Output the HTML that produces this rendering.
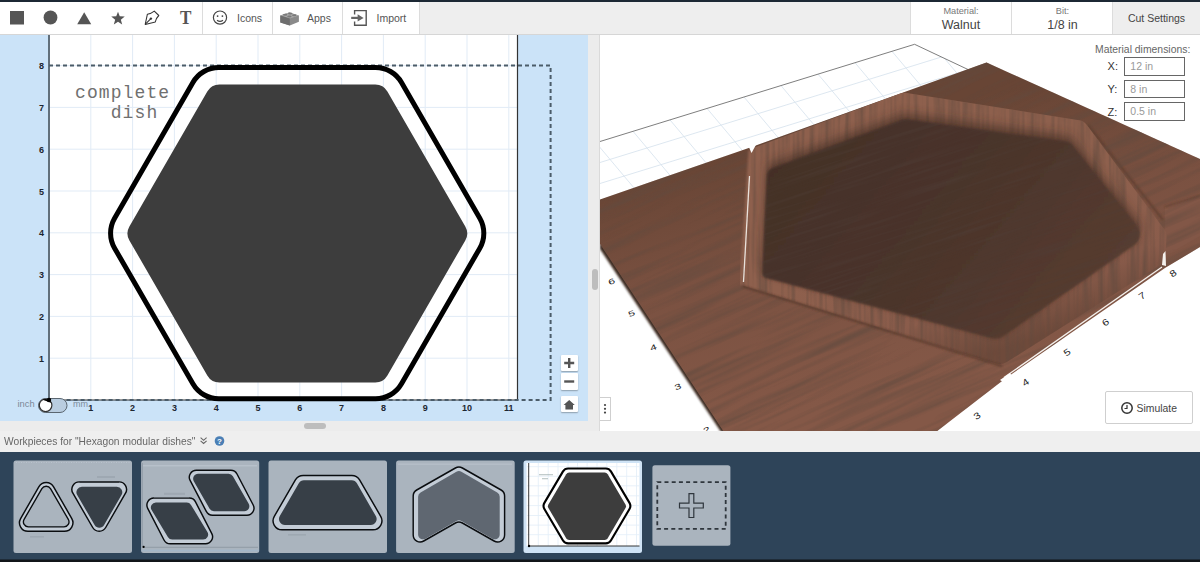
<!DOCTYPE html>
<html><head><meta charset="utf-8">
<style>
*{margin:0;padding:0;box-sizing:border-box}
html,body{width:1200px;height:562px;overflow:hidden;background:#fff;font-family:"Liberation Sans", sans-serif}
.abs{position:absolute}
#topstrip{left:0;top:0;width:1200px;height:2px;background:#1c2834}
#toolbar{left:0;top:2px;width:1200px;height:33px;background:#eeeeee;border-bottom:1px solid #d6d6d6}
.tb{position:absolute;top:0;height:32px;background:#fff;border-right:1px solid #dcdcdc}
.tbt{position:absolute;font-size:10.5px;color:#555;top:9px;white-space:nowrap;line-height:13px}
#canvas{left:0;top:35px;width:588px;height:386px;background:#cbe3f8;overflow:hidden}
.ax{position:absolute;font-size:9px;font-weight:bold;color:#1d2630;text-align:center;line-height:12px}
#hscroll{left:0;top:421px;width:588px;height:10px;background:#ececec}
#splitter{left:588px;top:35px;width:12px;height:396px;background:#ececec;border-right:1px solid #dadada}
#view3d{left:600px;top:35px;width:600px;height:396px;background:#fff;overflow:hidden}
#wpbar{left:0;top:431px;width:1200px;height:21px;background:#efefef}
#panel{left:0;top:452px;width:1200px;height:110px;background:#2e4459}
.zbtn{position:absolute;left:561px;width:16.5px;height:16.5px;background:#fff;box-shadow:0 1px 1.5px rgba(0,0,0,.3);border-radius:1px}
.inp{position:absolute;left:524.3px;width:60.5px;height:18.5px;border:1px solid #666;background:#fff;font-size:10.5px;color:#999;padding-left:5px;line-height:16.5px}
.inl{position:absolute;left:507.6px;font-size:11px;color:#333;line-height:13px}
</style></head><body>
<div id="topstrip" class="abs"></div>
<div id="toolbar" class="abs">
  <div class="tb" style="left:0;width:203px"></div>
  <div class="tb" style="left:203px;width:70px"></div>
  <div class="tb" style="left:273px;width:70px"></div>
  <div class="tb" style="left:343px;width:77px"></div>
  <div class="tb" style="left:910px;width:102px;border-left:1px solid #dcdcdc"></div>
  <div class="tb" style="left:1012px;width:101px"></div>
  <svg width="420" height="32" style="position:absolute;left:0;top:0"><rect x="10" y="9" width="14" height="13.5" fill="#555"/>
<circle cx="50.5" cy="15.5" r="6.9" fill="#555"/>
<polygon points="77.2,22.3 91.2,22.3 84.2,10.2" fill="#555"/>
<polygon points="118.00,9.70 119.76,14.37 124.75,14.61 120.85,17.73 122.17,22.54 118.00,19.80 113.83,22.54 115.15,17.73 111.25,14.61 116.24,14.37" fill="#555"/>
<g fill="none" stroke="#333" stroke-width="1.05" stroke-linejoin="round"><path d="M145.2,22.4 L147.4,12.2 Q151.2,11.6 154.3,9.1 L158.8,13.5 Q156,16.2 155.3,19.9 Z"/><path d="M145.4,22.2 L150.9,16.6"/></g><circle cx="150.9" cy="16.6" r="1.2" fill="#333"/>
<text x="0" y="0" transform="translate(185.7 22.3) scale(0.9 1)" font-family="Liberation Serif" font-weight="bold" font-size="19" fill="#555" text-anchor="middle">T</text>
<circle cx="220" cy="15.6" r="6.6" fill="none" stroke="#444" stroke-width="1.2"/><circle cx="217.6" cy="14.1" r="0.9" fill="#444"/><circle cx="222.4" cy="14.1" r="0.9" fill="#444"/><path d="M217,18.2 Q220,20.6 223,18.2" fill="none" stroke="#444" stroke-width="1.2"/>
<g><polygon points="280.3,13.6 289.2,10.6 298.9,13.4 298.9,19.8 289.8,23.6 280.3,20.6" fill="#8a8a8a"/><polygon points="280.3,13.6 289.8,16.6 298.9,13.4 289.2,10.6" fill="#a8a8a8"/><polygon points="280.3,13.6 289.8,16.6 289.8,23.6 280.3,20.6" fill="#6e6e6e"/><ellipse cx="285.2" cy="12.8" rx="2.2" ry="1" fill="#7a7a7a"/><ellipse cx="290.2" cy="11.4" rx="2.2" ry="1" fill="#7a7a7a"/><ellipse cx="289.4" cy="14.6" rx="2.2" ry="1" fill="#7a7a7a"/><ellipse cx="294.2" cy="13.2" rx="2.2" ry="1" fill="#7a7a7a"/></g>
<path d="M354.6,12.6 V8.6 H366.2 V23.2 H354.6 V19.6" fill="none" stroke="#555" stroke-width="1.4"/><path d="M351.2,15.9 H358.6" stroke="#666" stroke-width="2.2"/><polygon points="357.6,12.2 363.6,15.9 357.6,19.6" fill="#666"/></svg>
  <div class="tbt" style="left:237px;top:9.8px">Icons</div>
  <div class="tbt" style="left:307px;top:9.8px">Apps</div>
  <div class="tbt" style="left:376.5px;top:9.8px">Import</div>
  <div class="tbt" style="left:910px;width:102px;text-align:center;top:2.5px;font-size:9.2px;color:#777">Material:</div>
  <div class="tbt" style="left:910px;width:102px;text-align:center;top:15.8px;font-size:12.5px;color:#444;line-height:15px">Walnut</div>
  <div class="tbt" style="left:1012px;width:101px;text-align:center;top:2.5px;font-size:9.2px;color:#777">Bit:</div>
  <div class="tbt" style="left:1012px;width:101px;text-align:center;top:16.2px;font-size:12.5px;color:#444;line-height:15px">1/8 in</div>
  <div class="tbt" style="left:1113px;width:87px;text-align:center;top:9.9px;font-size:10.5px;color:#444">Cut Settings</div>
</div>
<div id="canvas" class="abs">
  <svg width="588" height="386" style="position:absolute;left:0;top:0">
  <rect x="50" y="0" width="467" height="365" fill="#fff"/>
<line x1="90.8" y1="0" x2="90.8" y2="365" stroke="#e1ebf6" stroke-width="1"/>
<line x1="132.6" y1="0" x2="132.6" y2="365" stroke="#e1ebf6" stroke-width="1"/>
<line x1="174.4" y1="0" x2="174.4" y2="365" stroke="#e1ebf6" stroke-width="1"/>
<line x1="216.2" y1="0" x2="216.2" y2="365" stroke="#e1ebf6" stroke-width="1"/>
<line x1="258.0" y1="0" x2="258.0" y2="365" stroke="#e1ebf6" stroke-width="1"/>
<line x1="299.8" y1="0" x2="299.8" y2="365" stroke="#e1ebf6" stroke-width="1"/>
<line x1="341.6" y1="0" x2="341.6" y2="365" stroke="#e1ebf6" stroke-width="1"/>
<line x1="383.4" y1="0" x2="383.4" y2="365" stroke="#e1ebf6" stroke-width="1"/>
<line x1="425.2" y1="0" x2="425.2" y2="365" stroke="#e1ebf6" stroke-width="1"/>
<line x1="467.0" y1="0" x2="467.0" y2="365" stroke="#e1ebf6" stroke-width="1"/>
<line x1="508.8" y1="0" x2="508.8" y2="365" stroke="#e1ebf6" stroke-width="1"/>
<line x1="50" y1="323.2" x2="517" y2="323.2" stroke="#e1ebf6" stroke-width="1"/>
<line x1="50" y1="281.4" x2="517" y2="281.4" stroke="#e1ebf6" stroke-width="1"/>
<line x1="50" y1="239.6" x2="517" y2="239.6" stroke="#e1ebf6" stroke-width="1"/>
<line x1="50" y1="197.8" x2="517" y2="197.8" stroke="#e1ebf6" stroke-width="1"/>
<line x1="50" y1="156.0" x2="517" y2="156.0" stroke="#e1ebf6" stroke-width="1"/>
<line x1="50" y1="114.2" x2="517" y2="114.2" stroke="#e1ebf6" stroke-width="1"/>
<line x1="50" y1="72.4" x2="517" y2="72.4" stroke="#e1ebf6" stroke-width="1"/>
<line x1="50" y1="30.6" x2="517" y2="30.6" stroke="#e1ebf6" stroke-width="1"/>
<line x1="517.5" y1="0" x2="517.5" y2="365" stroke="#333" stroke-width="1.2"/>
<line x1="49" y1="0" x2="49" y2="366" stroke="#56636d" stroke-width="1.8"/>
<line x1="49" y1="365" x2="517" y2="365" stroke="#333" stroke-width="1"/>
<path d="M49 30.6 H550.6 V365 H49" fill="none" stroke="#4b5c69" stroke-width="2" stroke-dasharray="4 3"/>
<path transform="translate(0,-35)" d="M114.6 218.2 L192.9 82.5 A30.0 30.0 0 0 1 218.9 67.5 L375.5 67.5 A30.0 30.0 0 0 1 401.5 82.5 L479.8 218.2 A30.0 30.0 0 0 1 479.8 248.2 L401.5 383.8 A30.0 30.0 0 0 1 375.5 398.8 L218.9 398.8 A30.0 30.0 0 0 1 192.9 383.8 L114.6 248.2 A30.0 30.0 0 0 1 114.6 218.2 Z" fill="none" stroke="#000" stroke-width="5"/>
<path transform="translate(0,-35)" d="M129.4 226.4 L207.3 91.5 A14.0 14.0 0 0 1 219.4 84.5 L375.3 84.5 A14.0 14.0 0 0 1 387.4 91.5 L465.3 226.4 A14.0 14.0 0 0 1 465.3 240.4 L387.4 375.4 A14.0 14.0 0 0 1 375.3 382.4 L219.4 382.4 A14.0 14.0 0 0 1 207.3 375.4 L129.4 240.4 A14.0 14.0 0 0 1 129.4 226.4 Z" fill="#3d3d3d"/>
<rect x="38.5" y="363.5" width="28.5" height="14" rx="7" fill="#b9cde0" stroke="#5a6670" stroke-width="1"/>
<circle cx="45.6" cy="370.3" r="6.3" fill="#fff" stroke="#333" stroke-width="1.2"/>
<path d="M42.5,364.8 A6.3 6.3 0 0 1 51.4,368 L49,367 Z" fill="#000"/>
<circle cx="49" cy="365" r="2.2" fill="#000"/>
  </svg>
  <div class="abs" style="left:75px;top:47.7px;font-family:'Liberation Mono',monospace;font-size:18px;letter-spacing:1.1px;color:#707070;line-height:20.7px;white-space:pre">complete
   dish</div>
  <div class="abs" style="left:17.5px;top:364px;font-size:9.3px;color:#7b8896">inch</div>
  <div class="abs" style="left:73px;top:364px;font-size:9px;color:#7b8a99">mm</div>
  <div class="zbtn" style="top:319.6px"></div>
  <div class="zbtn" style="top:338px"></div>
  <div class="zbtn" style="top:360.7px"></div>
  <svg width="588" height="386" style="position:absolute;left:0;top:0">
    <path d="M569.2,323 V333 M564.2,328 H574.2" stroke="#555" stroke-width="2.4"/>
    <path d="M564.2,346.5 H574.2" stroke="#555" stroke-width="2.4"/>
    <path d="M563.6,370 L569.2,365 L574.8,370 H573 V374.5 H565.4 V370 Z" fill="#555"/>
  </svg>
</div>
<div class="abs" style="left:0;top:0;width:0;height:0">
<div class="ax" style="left:80.8px;top:402.3px;width:20px">1</div>
<div class="ax" style="left:122.6px;top:402.3px;width:20px">2</div>
<div class="ax" style="left:164.4px;top:402.3px;width:20px">3</div>
<div class="ax" style="left:206.2px;top:402.3px;width:20px">4</div>
<div class="ax" style="left:248.0px;top:402.3px;width:20px">5</div>
<div class="ax" style="left:289.8px;top:402.3px;width:20px">6</div>
<div class="ax" style="left:331.6px;top:402.3px;width:20px">7</div>
<div class="ax" style="left:373.4px;top:402.3px;width:20px">8</div>
<div class="ax" style="left:415.2px;top:402.3px;width:20px">9</div>
<div class="ax" style="left:457.0px;top:402.3px;width:20px">10</div>
<div class="ax" style="left:498.8px;top:402.3px;width:20px">11</div>
<div class="ax" style="left:31.6px;top:352.7px;width:20px">1</div>
<div class="ax" style="left:31.6px;top:310.9px;width:20px">2</div>
<div class="ax" style="left:31.6px;top:269.1px;width:20px">3</div>
<div class="ax" style="left:31.6px;top:227.3px;width:20px">4</div>
<div class="ax" style="left:31.6px;top:185.5px;width:20px">5</div>
<div class="ax" style="left:31.6px;top:143.7px;width:20px">6</div>
<div class="ax" style="left:31.6px;top:101.9px;width:20px">7</div>
<div class="ax" style="left:31.6px;top:60.1px;width:20px">8</div>
</div>
<div id="hscroll" class="abs"><div class="abs" style="left:304px;top:2px;width:22px;height:6px;border-radius:3px;background:#bdbdbd"></div></div>
<div id="splitter" class="abs"><div class="abs" style="left:3.5px;top:234px;width:6px;height:21px;border-radius:3px;background:#bdbdbd"></div></div>
<div id="view3d" class="abs">
  <svg width="600" height="396" style="position:absolute;left:0;top:0"><defs><linearGradient id="gBoard" gradientUnits="userSpaceOnUse" x1="100" y1="125" x2="160" y2="385"><stop offset="0" stop-color="#684535"/><stop offset="0.45" stop-color="#7a5141"/><stop offset="1" stop-color="#845847"/></linearGradient><linearGradient id="gFloor" gradientUnits="userSpaceOnUse" x1="180" y1="95" x2="440" y2="315"><stop offset="0" stop-color="#432f27"/><stop offset="0.5" stop-color="#4a342b"/><stop offset="1" stop-color="#573c30"/></linearGradient><linearGradient id="gRim" gradientUnits="userSpaceOnUse" x1="300" y1="215" x2="340" y2="335"><stop offset="0" stop-color="#8e604d"/><stop offset="0.6" stop-color="#8a5c4b"/><stop offset="1" stop-color="#6e4a3b"/></linearGradient><linearGradient id="gW1" gradientUnits="userSpaceOnUse" x1="220" y1="90" x2="230" y2="115"><stop offset="0" stop-color="#835746"/><stop offset="0.5" stop-color="#6f4a3a"/><stop offset="1" stop-color="#4a332b"/></linearGradient><linearGradient id="gW2" gradientUnits="userSpaceOnUse" x1="390" y1="71" x2="385" y2="97"><stop offset="0" stop-color="#835746"/><stop offset="0.5" stop-color="#6f4a3a"/><stop offset="1" stop-color="#4a332b"/></linearGradient><linearGradient id="gW3" gradientUnits="userSpaceOnUse" x1="550" y1="170" x2="525" y2="187"><stop offset="0" stop-color="#86594a"/><stop offset="0.6" stop-color="#7a5141"/><stop offset="1" stop-color="#5a3c30"/></linearGradient><linearGradient id="gW4" gradientUnits="userSpaceOnUse" x1="144" y1="185" x2="164" y2="187"><stop offset="0" stop-color="#86594a"/><stop offset="0.6" stop-color="#7a5141"/><stop offset="1" stop-color="#55392e"/></linearGradient>
<filter id="blur2" x="-10%" y="-10%" width="120%" height="120%"><feGaussianBlur stdDeviation="1.5"/></filter>
<filter id="blur6" x="-20%" y="-20%" width="140%" height="140%"><feGaussianBlur stdDeviation="5"/></filter>
<filter id="blur1" x="-10%" y="-10%" width="120%" height="120%"><feGaussianBlur stdDeviation="1"/></filter>
<filter id="grain" x="0" y="0" width="1" height="1" filterUnits="objectBoundingBox">
 <feTurbulence type="fractalNoise" baseFrequency="0.006 0.13" numOctaves="3" seed="7"/>
 <feColorMatrix type="matrix" values="0 0 0 0 0.12  0 0 0 0 0.07  0 0 0 0 0.05  2.2 0 0 0 -0.95"/>
</filter>
<filter id="fgrain" x="0" y="0" width="1" height="1" filterUnits="objectBoundingBox">
 <feTurbulence type="fractalNoise" baseFrequency="0.01 0.3" numOctaves="2" seed="5"/>
 <feColorMatrix type="matrix" values="0 0 0 0 0.08  0 0 0 0 0.05  0 0 0 0 0.04  2.0 0 0 0 -0.9"/>
</filter>
<filter id="vgrain" x="0" y="0" width="1" height="1" filterUnits="objectBoundingBox">
 <feTurbulence type="fractalNoise" baseFrequency="0.2 0.01" numOctaves="2" seed="11"/>
 <feColorMatrix type="matrix" values="0 0 0 0 0.12  0 0 0 0 0.07  0 0 0 0 0.05  2.4 0 0 0 -0.95"/>
</filter>
<clipPath id="cBoard"><polygon points="0.0,164.4 152.3,111.8 386.5,27.4 600.0,124.0 600.0,212.0 565.0,233.0 406.0,343.0 336.0,397.0 124.0,397.0 0.0,208.7"/></clipPath>
<clipPath id="cFloor"><path d="M172.0 133.2 L301.6 84.9 A10.0 10.0 0 0 1 306.5 84.3 L465.3 106.3 A12.0 12.0 0 0 1 473.0 110.7 L536.7 190.3 A14.0 14.0 0 0 1 533.7 210.5 L403.3 301.3 A14.0 14.0 0 0 1 391.7 303.3 L166.7 243.2 A6.0 6.0 0 0 1 162.2 237.2 L166.8 140.3 A8.0 8.0 0 0 1 172.0 133.2 Z"/></clipPath>
<clipPath id="cRing"><path d="M153.7 112.7 L301.0 58.2 A8.0 8.0 0 0 1 305.1 57.8 L479.1 85.2 A12.0 12.0 0 0 1 486.9 89.9 L565.7 196.2 A6.0 6.0 0 0 1 566.8 200.2 L565.2 224.0 A6.0 6.0 0 0 1 562.4 228.6 L406.7 327.1 A12.0 12.0 0 0 1 396.7 328.4 L145.5 251.4 A6.0 6.0 0 0 1 141.3 245.3 L149.7 117.9 A6.0 6.0 0 0 1 153.7 112.7 Z"/></clipPath>
</defs>
<clipPath id="cPlane"><polygon points="0.0,106.5 314.6,9.3 400.0,49.0 0.0,164.4"/></clipPath>
<polygon points="0.0,106.5 314.6,9.3 400.0,49.0 0.0,164.4" fill="#fff"/>
<g stroke="#d9e4ee" stroke-width="0.9" clip-path="url(#cPlane)"><line x1="0.0" y1="127.5" x2="400.0" y2="3.9"/><line x1="0.0" y1="148.5" x2="400.0" y2="24.9"/><line x1="0.0" y1="169.5" x2="400.0" y2="45.9"/><line x1="-44.0" y1="60.1" x2="76.0" y2="202.9"/><line x1="-7.0" y1="48.7" x2="113.0" y2="191.5"/><line x1="30.0" y1="37.3" x2="150.0" y2="180.1"/><line x1="67.0" y1="25.8" x2="187.0" y2="168.6"/><line x1="104.0" y1="14.4" x2="224.0" y2="157.2"/><line x1="141.0" y1="3.0" x2="261.0" y2="145.8"/><line x1="178.0" y1="-8.5" x2="298.0" y2="134.3"/><line x1="215.0" y1="-19.9" x2="335.0" y2="122.9"/><line x1="252.0" y1="-31.3" x2="372.0" y2="111.5"/><line x1="289.0" y1="-42.7" x2="409.0" y2="100.1"/></g>
<polyline points="0.0,106.5 314.6,9.3 368.0,34.5" fill="none" stroke="#6f6f6f" stroke-width="0.9"/>
<polygon points="0.0,206.0 126.0,397.0 121.0,397.0 0.0,214.0" fill="#3a271e" filter="url(#blur1)"/>
<polygon points="0.0,164.4 152.3,111.8 386.5,27.4 600.0,124.0 600.0,212.0 565.0,233.0 406.0,343.0 336.0,397.0 124.0,397.0 0.0,208.7" fill="url(#gBoard)"/>
<polygon points="565.0,172.0 600.0,161.0 600.0,201.0 565.0,221.0" fill="#825747"/>
<polyline points="565.0,172.0 600.0,161.0" stroke="#5a3a2c" stroke-width="1.2" fill="none" filter="url(#blur1)"/>
<polyline points="488.0,90.0 563.0,185.0" stroke="#5a3a2c" stroke-width="1.6" fill="none" filter="url(#blur1)"/>
<g clip-path="url(#cBoard)" opacity="0.75"><rect x="-300" y="-300" width="1200" height="1000" transform="rotate(-24 300 200)" filter="url(#grain)"/></g>
<path d="M153.7 112.7 L301.0 58.2 A8.0 8.0 0 0 1 305.1 57.8 L479.1 85.2 A12.0 12.0 0 0 1 486.9 89.9 L565.7 196.2 A6.0 6.0 0 0 1 566.8 200.2 L565.2 224.0 A6.0 6.0 0 0 1 562.4 228.6 L406.7 327.1 A12.0 12.0 0 0 1 396.7 328.4 L145.5 251.4 A6.0 6.0 0 0 1 141.3 245.3 L149.7 117.9 A6.0 6.0 0 0 1 153.7 112.7 Z" fill="url(#gRim)"/>
<g clip-path="url(#cRing)">
<rect x="100" y="40" width="600" height="360" filter="url(#vgrain)" opacity="0.6"/>
<path transform="translate(0,-6)" d="M172.0 133.2 L301.6 84.9 A10.0 10.0 0 0 1 306.5 84.3 L465.3 106.3 A12.0 12.0 0 0 1 473.0 110.7 L536.7 190.3 A14.0 14.0 0 0 1 533.7 210.5 L403.3 301.3 A14.0 14.0 0 0 1 391.7 303.3 L166.7 243.2 A6.0 6.0 0 0 1 162.2 237.2 L166.8 140.3 A8.0 8.0 0 0 1 172.0 133.2 Z" fill="#3e2a22" opacity="0.6" filter="url(#blur6)"/>
</g>
<polyline points="143.0,251.5 402.0,331.0" stroke="#543729" stroke-width="1.8" fill="none" filter="url(#blur1)"/>
<path d="M172.0 133.2 L301.6 84.9 A10.0 10.0 0 0 1 306.5 84.3 L465.3 106.3 A12.0 12.0 0 0 1 473.0 110.7 L536.7 190.3 A14.0 14.0 0 0 1 533.7 210.5 L403.3 301.3 A14.0 14.0 0 0 1 391.7 303.3 L166.7 243.2 A6.0 6.0 0 0 1 162.2 237.2 L166.8 140.3 A8.0 8.0 0 0 1 172.0 133.2 Z" fill="url(#gFloor)" filter="url(#blur1)"/>
<g clip-path="url(#cFloor)" opacity="0.6"><rect x="-300" y="-300" width="1200" height="1000" transform="rotate(-18 300 200)" filter="url(#fgrain)"/></g>
<polyline points="150.0,115.0 141.0,250.0" stroke="#8e604e" stroke-width="3" fill="none" filter="url(#blur1)"/>
<polyline points="149.5,141.0 143.5,247.0" stroke="#f3efeb" stroke-width="1.3" fill="none" opacity="0.9"/>
<polygon points="148.0,110.0 157.0,108.0 151.5,118.0" fill="#fff"/>
<polyline points="404.0,342.5 562.0,232.0" stroke="#f4f0ec" stroke-width="1.3" fill="none"/>
<polygon points="400.0,345.0 410.0,338.0 412.0,341.0 403.0,347.0" fill="#fff"/>
<polygon points="563.0,219.0 565.5,216.0 566.0,231.0 562.0,230.0" fill="#f4f0ec"/>
  <text x="0" y="0" transform="translate(11.5 246.5) rotate(-22) scale(1 0.65)" font-size="12" fill="#222" text-anchor="middle" dominant-baseline="central">6</text>
<text x="0" y="0" transform="translate(31.700000000000045 278.5) rotate(-22) scale(1 0.65)" font-size="12" fill="#222" text-anchor="middle" dominant-baseline="central">5</text>
<text x="0" y="0" transform="translate(53.299999999999955 312.5) rotate(-22) scale(1 0.65)" font-size="12" fill="#222" text-anchor="middle" dominant-baseline="central">4</text>
<text x="0" y="0" transform="translate(77.79999999999995 351.7) rotate(-22) scale(1 0.65)" font-size="12" fill="#222" text-anchor="middle" dominant-baseline="central">3</text>
<text x="0" y="0" transform="translate(106.60000000000002 395) rotate(-22) scale(1 0.65)" font-size="12" fill="#222" text-anchor="middle" dominant-baseline="central">2</text>
<text x="0" y="0" transform="translate(377 381) rotate(-35) scale(1 0.8)" font-size="11.5" fill="#222" text-anchor="middle" dominant-baseline="central">3</text>
<text x="0" y="0" transform="translate(425.5 347.5) rotate(-35) scale(1 0.8)" font-size="11.5" fill="#222" text-anchor="middle" dominant-baseline="central">4</text>
<text x="0" y="0" transform="translate(467 317.5) rotate(-35) scale(1 0.8)" font-size="11.5" fill="#222" text-anchor="middle" dominant-baseline="central">5</text>
<text x="0" y="0" transform="translate(505.5 287.5) rotate(-35) scale(1 0.8)" font-size="11.5" fill="#222" text-anchor="middle" dominant-baseline="central">6</text>
<text x="0" y="0" transform="translate(542 261) rotate(-35) scale(1 0.8)" font-size="11.5" fill="#222" text-anchor="middle" dominant-baseline="central">7</text>
<text x="0" y="0" transform="translate(573 238.5) rotate(-35) scale(1 0.8)" font-size="11.5" fill="#222" text-anchor="middle" dominant-baseline="central">8</text></svg>
  <div class="abs" style="left:495px;top:8px;font-size:10.4px;color:#666;line-height:13px;white-space:nowrap">Material dimensions:</div>
  <div class="inl" style="top:25px">X:</div>
  <div class="inl" style="top:48px">Y:</div>
  <div class="inl" style="top:71px">Z:</div>
  <div class="inp" style="top:22.3px">12 in</div>
  <div class="inp" style="top:44.5px">8 in</div>
  <div class="inp" style="top:67.2px">0.5 in</div>
  <div class="abs" style="left:504.6px;top:355.8px;width:88.4px;height:33.6px;border:1px solid #cfcfcf;border-radius:2px;background:#fff"></div>
  <svg width="600" height="396" style="position:absolute;left:0;top:0">
    <circle cx="527" cy="373" r="5.2" fill="none" stroke="#333" stroke-width="1.5"/>
    <path d="M527,370 V373.5 H524.5" fill="none" stroke="#333" stroke-width="1.2"/>
  </svg>
  <div class="abs" style="left:536.5px;top:366.8px;font-size:10.4px;color:#444;line-height:13px">Simulate</div>
  <div class="abs" style="left:0;top:362px;width:10.5px;height:23.5px;border:1px solid #cfcfcf;border-left:none;background:#fff"></div>
  <svg width="12" height="30" style="position:absolute;left:0;top:362px"><circle cx="5" cy="8" r="1.1" fill="#444"/><circle cx="5" cy="11.8" r="1.1" fill="#444"/><circle cx="5" cy="15.6" r="1.1" fill="#444"/></svg>
</div>
<div id="wpbar" class="abs">
  <div class="abs" style="left:4px;top:4px;font-size:11.2px;color:#666;line-height:13px;white-space:nowrap;transform:scaleX(0.915);transform-origin:0 0">Workpieces for "Hexagon modular dishes"</div>
  <svg width="240" height="21" style="position:absolute;left:0;top:0">
    <path d="M200.6,6.6 L203.6,9.3 L206.6,6.6 M200.6,9.8 L203.6,12.5 L206.6,9.8" fill="none" stroke="#666" stroke-width="1.1"/>
    <circle cx="219.5" cy="10" r="4.8" fill="#4a7fb5"/>
    <text x="219.5" y="13.3" font-size="8" font-weight="bold" fill="#fff" text-anchor="middle">?</text>
  </svg>
</div>
<div id="panel" class="abs">
  <svg width="1200" height="110" style="position:absolute;left:0;top:0"><rect x="13.5" y="8.600000000000023" width="118.5" height="92.4" rx="2.5" fill="#aab4be"/>
<rect x="141.1" y="8.600000000000023" width="118.1" height="92.4" rx="2.5" fill="#aab4be"/>
<rect x="268.5" y="8.600000000000023" width="118.5" height="92.4" rx="2.5" fill="#aab4be"/>
<rect x="396.1" y="8.600000000000023" width="118.6" height="92.4" rx="2.5" fill="#aab4be"/>
<line x1="16" y1="10.5" x2="130" y2="10.5" stroke="#bcc5ce" stroke-width="0.8" stroke-dasharray="1 1.5"/>
<line x1="143" y1="13.800000000000011" x2="257" y2="13.800000000000011" stroke="#bfc8d1" stroke-width="0.9"/>
<line x1="142.4" y1="11" x2="142.4" y2="95.29999999999995" stroke="#8d98a3" stroke-width="0.8"/>
<line x1="142.4" y1="95.29999999999995" x2="258" y2="95.29999999999995" stroke="#8d98a3" stroke-width="0.9"/>
<line x1="141.5" y1="98.5" x2="259" y2="98.5" stroke="#9fb8d0" stroke-width="2" opacity="0.5"/>
<circle cx="143.6" cy="94.89999999999998" r="1.1" fill="#000"/>
<line x1="398" y1="12.100000000000023" x2="512" y2="12.100000000000023" stroke="#bcc5ce" stroke-width="0.9"/>
<path d="M53.6 34.8 L71.8 66.6 A8.5 8.5 0 0 1 64.4 79.3 L28.0 79.3 A8.5 8.5 0 0 1 20.6 66.6 L38.8 34.8 A8.5 8.5 0 0 1 53.6 34.8 Z" fill="#c3ccd6" stroke="#0a0d10" stroke-width="1.45"/>
<path d="M50.5 36.7 L68.3 67.4 A5.0 5.0 0 0 1 63.9 74.9 L28.5 74.9 A5.0 5.0 0 0 1 24.1 67.4 L41.9 36.7 A5.0 5.0 0 0 1 50.5 36.7 Z" fill="#aab4be" stroke="#0a0d10" stroke-width="1.35"/>
<path d="M79.4 29.9 L119.0 29.9 A7.5 7.5 0 0 1 125.5 41.2 L105.7 75.5 A7.5 7.5 0 0 1 92.7 75.5 L72.9 41.2 A7.5 7.5 0 0 1 79.4 29.9 Z" fill="#c3ccd6" stroke="#0a0d10" stroke-width="1.45"/>
<path d="M82.0 34.8 L116.7 34.8 A5.5 5.5 0 0 1 121.5 43.1 L104.1 72.9 A5.5 5.5 0 0 1 94.6 72.9 L77.2 43.1 A5.5 5.5 0 0 1 82.0 34.8 Z" fill="#373f47"/>
<rect x="97" y="24" width="18" height="2" fill="#98a2ac" opacity="0.7"/>
<rect x="30" y="84" width="14" height="1.5" fill="#98a2ac" opacity="0.7"/>
<path d="M196.4 18.2 L230.8 18.2 A7.0 7.0 0 0 1 237.0 22.0 L253.2 53.0 A7.0 7.0 0 0 1 246.9 63.2 L212.5 63.2 A7.0 7.0 0 0 1 206.3 59.4 L190.1 28.4 A7.0 7.0 0 0 1 196.4 18.2 Z" fill="#c3ccd6" stroke="#0a0d10" stroke-width="1.45"/>
<path d="M198.1 21.7 L228.6 21.7 A5.0 5.0 0 0 1 232.9 24.2 L248.7 51.7 A5.0 5.0 0 0 1 244.4 59.2 L213.9 59.2 A5.0 5.0 0 0 1 209.6 56.7 L193.8 29.2 A5.0 5.0 0 0 1 198.1 21.7 Z" fill="#373f47"/>
<path d="M154.0 46.1 L189.2 46.1 A7.0 7.0 0 0 1 195.5 49.9 L211.8 81.6 A7.0 7.0 0 0 1 205.5 91.8 L170.3 91.8 A7.0 7.0 0 0 1 164.0 88.0 L147.7 56.3 A7.0 7.0 0 0 1 154.0 46.1 Z" fill="#c3ccd6" stroke="#0a0d10" stroke-width="1.45"/>
<path d="M155.9 50.5 L186.7 50.5 A5.0 5.0 0 0 1 191.0 52.9 L207.4 80.0 A5.0 5.0 0 0 1 203.1 87.6 L172.3 87.6 A5.0 5.0 0 0 1 168.0 85.2 L151.6 58.1 A5.0 5.0 0 0 1 155.9 50.5 Z" fill="#373f47"/>
<rect x="164" y="40.80000000000001" width="21" height="2" fill="#98a2ac" opacity="0.7"/>
<path d="M303.2 23.4 L351.8 23.4 A9.0 9.0 0 0 1 359.6 27.9 L380.7 64.3 A9.0 9.0 0 0 1 372.9 77.8 L282.1 77.8 A9.0 9.0 0 0 1 274.3 64.3 L295.4 27.9 A9.0 9.0 0 0 1 303.2 23.4 Z" fill="#c3ccd6" stroke="#0a0d10" stroke-width="1.45"/>
<path d="M304.0 28.3 L351.7 28.3 A6.0 6.0 0 0 1 356.9 31.3 L375.8 64.1 A6.0 6.0 0 0 1 370.6 73.1 L285.0 73.1 A6.0 6.0 0 0 1 279.8 64.1 L298.8 31.3 A6.0 6.0 0 0 1 304.0 28.3 Z" fill="#373f47"/>
<rect x="288" y="82" width="18" height="1.6" fill="#98a2ac" opacity="0.7"/>
<path d="M462.4 16.0 L501.1 38.0 A7.0 7.0 0 0 1 504.6 44.1 L504.6 83.0 A7.0 7.0 0 0 1 494.1 89.0 L462.4 71.0 A7.0 7.0 0 0 0 455.4 71.0 L423.7 89.0 A7.0 7.0 0 0 1 413.2 83.0 L413.2 44.1 A7.0 7.0 0 0 1 416.7 38.0 L455.4 16.0 A7.0 7.0 0 0 1 462.4 16.0 Z" fill="#c3ccd6" stroke="#0a0d10" stroke-width="1.45"/>
<path d="M461.4 19.7 L497.2 40.4 A5.0 5.0 0 0 1 499.7 44.7 L499.7 82.4 A5.0 5.0 0 0 1 492.2 86.7 L461.4 68.9 A5.0 5.0 0 0 0 456.4 68.9 L425.6 86.7 A5.0 5.0 0 0 1 418.1 82.4 L418.1 44.7 A5.0 5.0 0 0 1 420.6 40.4 L456.4 19.7 A5.0 5.0 0 0 1 461.4 19.7 Z" fill="#5f6771"/>
<rect x="523.5" y="8.600000000000023" width="118.5" height="92.4" rx="2.5" fill="#cfe3f5"/>
<rect x="526.5" y="11" width="113" height="83" fill="#fff"/>
<line x1="538.3" y1="11" x2="538.3" y2="94" stroke="#e2edf7" stroke-width="0.8"/>
<line x1="548.2" y1="11" x2="548.2" y2="94" stroke="#e2edf7" stroke-width="0.8"/>
<line x1="558" y1="11" x2="558" y2="94" stroke="#e2edf7" stroke-width="0.8"/>
<line x1="568" y1="11" x2="568" y2="94" stroke="#e2edf7" stroke-width="0.8"/>
<line x1="577.5" y1="11" x2="577.5" y2="94" stroke="#e2edf7" stroke-width="0.8"/>
<line x1="587.1" y1="11" x2="587.1" y2="94" stroke="#e2edf7" stroke-width="0.8"/>
<line x1="597" y1="11" x2="597" y2="94" stroke="#e2edf7" stroke-width="0.8"/>
<line x1="606.8" y1="11" x2="606.8" y2="94" stroke="#e2edf7" stroke-width="0.8"/>
<line x1="616.8" y1="11" x2="616.8" y2="94" stroke="#e2edf7" stroke-width="0.8"/>
<line x1="626.7" y1="11" x2="626.7" y2="94" stroke="#e2edf7" stroke-width="0.8"/>
<line x1="636.5" y1="11" x2="636.5" y2="94" stroke="#e2edf7" stroke-width="0.8"/>
<line x1="527" y1="14.699999999999989" x2="639.5" y2="14.699999999999989" stroke="#e2edf7" stroke-width="0.8"/>
<line x1="527" y1="24.30000000000001" x2="639.5" y2="24.30000000000001" stroke="#e2edf7" stroke-width="0.8"/>
<line x1="527" y1="33.80000000000001" x2="639.5" y2="33.80000000000001" stroke="#e2edf7" stroke-width="0.8"/>
<line x1="527" y1="43.80000000000001" x2="639.5" y2="43.80000000000001" stroke="#e2edf7" stroke-width="0.8"/>
<line x1="527" y1="53.60000000000002" x2="639.5" y2="53.60000000000002" stroke="#e2edf7" stroke-width="0.8"/>
<line x1="527" y1="63.5" x2="639.5" y2="63.5" stroke="#e2edf7" stroke-width="0.8"/>
<line x1="527" y1="73.10000000000002" x2="639.5" y2="73.10000000000002" stroke="#e2edf7" stroke-width="0.8"/>
<line x1="527" y1="82.70000000000005" x2="639.5" y2="82.70000000000005" stroke="#e2edf7" stroke-width="0.8"/>
<line x1="528.7" y1="11" x2="528.7" y2="94" stroke="#222" stroke-width="0.9"/>
<line x1="528.7" y1="94" x2="639.5" y2="94" stroke="#222" stroke-width="0.9"/>
<circle cx="529" cy="94" r="1.2" fill="#000"/>
<path d="M544.4 50.9 L563.0 19.4 A6.0 6.0 0 0 1 568.2 16.5 L605.7 16.5 A6.0 6.0 0 0 1 610.9 19.4 L629.5 50.9 A6.0 6.0 0 0 1 629.5 57.0 L610.9 88.5 A6.0 6.0 0 0 1 605.7 91.4 L568.2 91.4 A6.0 6.0 0 0 1 563.0 88.5 L544.4 57.0 A6.0 6.0 0 0 1 544.4 50.9 Z" fill="#fff" stroke="#000" stroke-width="2.1"/>
<path d="M548.4 52.5 L566.2 22.2 A3.5 3.5 0 0 1 569.2 20.5 L604.7 20.5 A3.5 3.5 0 0 1 607.7 22.2 L625.5 52.5 A3.5 3.5 0 0 1 625.5 56.0 L607.7 86.3 A3.5 3.5 0 0 1 604.7 88.0 L569.2 88.0 A3.5 3.5 0 0 1 566.2 86.3 L548.4 56.0 A3.5 3.5 0 0 1 548.4 52.5 Z" fill="#3d3d3d"/>
<rect x="539" y="22" width="14" height="1.3" fill="#9aa" opacity="0.6"/>
<rect x="542" y="26" width="6" height="1.3" fill="#9aa" opacity="0.6"/>
<rect x="652.4" y="13.199999999999989" width="78" height="80.5" rx="2.5" fill="#aab4be"/>
<rect x="657.3" y="30.100000000000023" width="68.4" height="46.8" fill="none" stroke="#2f363d" stroke-width="1.8" stroke-dasharray="4 3.2"/>
<path d="M689.0,41.700000000000024 H693.8 V51.200000000000024 H703.3 V56.00000000000002 H693.8 V65.50000000000003 H689.0 V56.00000000000002 H679.5 V51.200000000000024 H689.0 Z" fill="#aab4be" stroke="#2f363d" stroke-width="1.2"/>
  <rect x="0" y="107.5" width="1200" height="2.5" fill="#111519"/></svg>
</div>
</body></html>
